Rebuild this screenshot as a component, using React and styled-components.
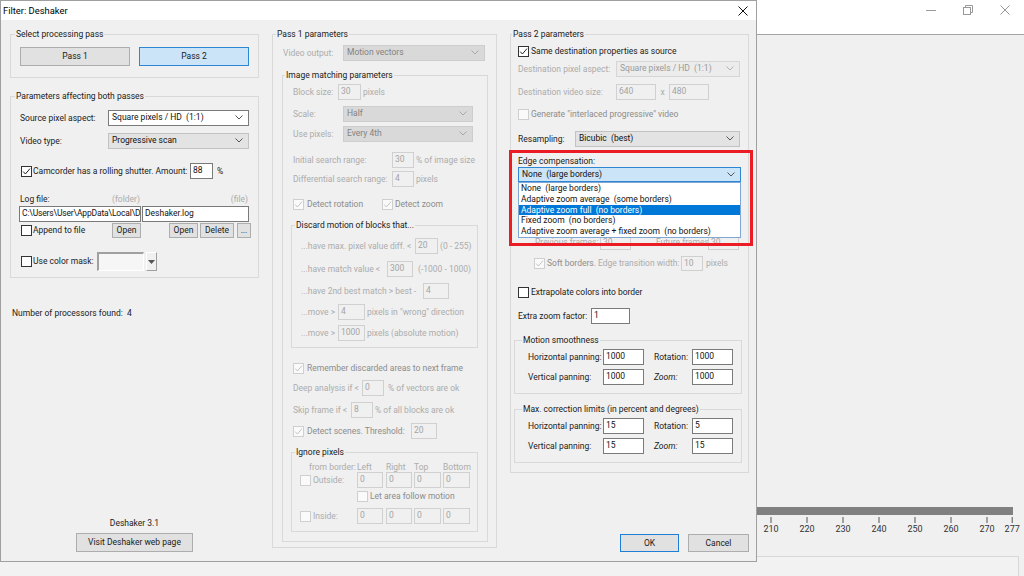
import styled, { createGlobalStyle } from 'styled-components';

const GlobalStyle = createGlobalStyle`
  html, body {
    margin: 0;
    padding: 0;
  }
  body {
    width: 1024px;
    height: 576px;
    overflow: hidden;
    background: #f0f0f0;
    font-family: Roboto, "Liberation Sans", Arial, sans-serif;
    color: #222;
  }
`;

const tone = {
  dis: '#acacac',
  disc: '#8c8c8c',
  normal: '#222',
};

const Screen = styled.div`
  position: relative;
  width: 1024px;
  height: 576px;
  overflow: hidden;
`;

const AppWindow = styled.div`
  display: flex;
  flex-direction: column;
  height: 576px;
`;

const AppTitleBar = styled.div`
  height: 34px;
  background: #fff;
  border-bottom: 1px solid #a3a3a3;
  display: flex;
  justify-content: flex-end;
  padding-right: 1px;
`;

const WinCtl = styled.div`
  width: 37px;
  height: 19px;
  display: flex;
  align-items: center;
  justify-content: center;
`;

const AppContent = styled.div`
  flex: 1;
  display: flex;
  flex-direction: column;
  justify-content: flex-end;
`;

const Timeline = styled.svg`
  display: block;
  margin-bottom: 19px;
  font-family: Roboto, "Liberation Sans", Arial, sans-serif;
`;

const BottomPanel = styled.div`
  height: 19px;
  margin-right: 5px;
  border-top: 1px solid #d8d8d8;
  border-right: 1px solid #d8d8d8;
  background: #f2f2f2;
`;

const Dialog = styled.div`
  position: absolute;
  left: 0;
  top: 0;
  width: 757px;
  height: 562px;
  box-sizing: border-box;
  border: 1px solid #a0a0a0;
  background: #f0f0f0;
  display: flex;
  flex-direction: column;
  font-size: 8.5px;
`;

const DialogTitle = styled.div`
  height: 19px;
  background: #fff;
  display: flex;
  align-items: center;
  justify-content: space-between;
  padding: 0 8px 0 2px;
  font-size: 9.4px;
  color: #000;
`;

const DialogBody = styled.div`
  flex: 1;
  display: flex;
  gap: 13px;
  padding: 0 6px 0 9px;
`;

const Column = styled.div`
  width: ${p => p.$w}px;
  flex: none;
  display: flex;
  flex-direction: column;
  padding: 9px 0 9px;
`;

const Group = styled.fieldset`
  margin: ${p => p.$mt || 0}px 0 0 ${p => p.$ml || 0}px;
  padding: 0 0 ${p => p.$pb || 0}px 0;
  border: 1px solid #d9d9d9;
  min-width: 0;
  width: ${p => (p.$w ? `${p.$w}px` : 'auto')};
  box-sizing: border-box;
  flex: none;
`;

const Legend = styled.legend`
  margin-left: ${p => p.$ml || 0}px;
  padding: 0 1px;
  height: 10px;
  line-height: 10px;
  color: #1a1a1a;
  font-size: 8.5px;
`;

const Row = styled.div`
  display: flex;
  align-items: center;
  height: ${p => p.$h || 16}px;
  margin-top: ${p => p.$mt || 0}px;
  padding-left: ${p => p.$pl || 0}px;
  padding-right: ${p => p.$pr || 0}px;
  white-space: nowrap;
  flex: none;
`;

const Text = styled.span`
  flex: none;
  width: ${p => (p.$w ? `${p.$w}px` : 'auto')};
  margin-left: ${p => p.$ml || 0}px;
  color: ${p => tone[p.$tone || 'normal']};
  font-style: ${p => (p.$italic ? 'italic' : 'normal')};
  text-align: ${p => p.$align || 'left'};
  line-height: 1;
  white-space: pre;
`;

const Spacer = styled.span`
  flex: 1;
`;

const Field = styled.div`
  flex: none;
  width: ${p => p.$w}px;
  height: ${p => p.$h || 16}px;
  margin-left: ${p => p.$ml || 0}px;
  box-sizing: border-box;
  border: 1px solid ${p => (p.$disabled ? '#d0d0d0' : '#7a7a7a')};
  background: ${p => (p.$disabled ? '#f0f0f0' : '#fff')};
  color: ${p => (p.$disabled ? '#a4a4a4' : '#111')};
  padding: 1px 1px 0 2px;
  line-height: 11px;
  letter-spacing: ${p => (p.$tight ? '-0.15px' : '0')};
  white-space: nowrap;
  overflow: hidden;
`;

const comboLook = {
  white: { bg: '#fff', border: '#7a7a7a', color: '#111', arrow: '#555' },
  gray: { bg: '#e3e3e3', border: '#c2c2c2', color: '#111', arrow: '#555' },
  list: { bg: '#d9d9d9', border: '#cdcdcd', color: '#838383', arrow: '#a8a8a8' },
  edit: { bg: '#ececec', border: '#d6d6d6', color: '#9a9a9a', arrow: '#b4b4b4' },
  focus: { bg: '#cce4f7', border: '#2f86d2', color: '#111', arrow: '#555' },
};

const Combo = styled.div`
  flex: none;
  width: ${p => p.$w}px;
  height: ${p => p.$h || 16}px;
  box-sizing: border-box;
  border: 1px solid ${p => comboLook[p.$look].border};
  background: ${p => comboLook[p.$look].bg};
  color: ${p => comboLook[p.$look].color};
  display: flex;
  align-items: center;
  justify-content: space-between;
  padding: 0 5px 1px 3px;
  line-height: 1;
  white-space: pre;
`;

const ComboWrap = styled.div`
  position: relative;
  width: ${p => p.$w}px;
  flex: none;
`;

const DropList = styled.div`
  position: absolute;
  left: 0;
  top: 100%;
  width: 100%;
  box-sizing: border-box;
  border: 1px solid #7fa7d4;
  background: #fff;
  z-index: 3;
`;

const DropItem = styled.div`
  height: 10.8px;
  line-height: 10.8px;
  padding-left: 2px;
  white-space: pre;
  background: ${p => (p.$active ? '#0078d7' : 'transparent')};
  color: ${p => (p.$active ? '#fff' : '#111')};
`;

const Box = styled.span`
  flex: none;
  width: 11px;
  height: 11px;
  box-sizing: border-box;
  border: 1px solid ${p => (p.$disabled ? '#cfcfcf' : '#333')};
  background: ${p => (p.$disabled ? '#fafafa' : '#fff')};
  display: flex;
  align-items: center;
  justify-content: center;
`;

const btnLook = {
  normal: { bg: '#e1e1e1', border: '#adadad' },
  pressed: { bg: '#cce4f7', border: '#2c86d3' },
  focus: { bg: '#e1e1e1', border: '#1f7fd6' },
};

const Button = styled.div`
  flex: none;
  width: ${p => p.$w}px;
  height: ${p => p.$h || 15}px;
  margin-left: ${p => p.$ml || 0}px;
  margin-top: ${p => p.$mt || 0}px;
  box-sizing: border-box;
  border: 1px solid ${p => btnLook[p.$look || 'normal'].border};
  background: ${p => btnLook[p.$look || 'normal'].bg};
  display: flex;
  align-items: center;
  justify-content: center;
  color: #1a1a1a;
  line-height: 1;
  white-space: nowrap;
`;

const Footer = styled.div`
  margin-top: auto;
  display: flex;
  flex-direction: ${p => (p.$stack ? 'column' : 'row')};
  justify-content: ${p => (p.$stack ? 'flex-start' : 'flex-end')};
  align-items: ${p => (p.$stack ? 'center' : 'flex-start')};
`;

const MaskWell = styled.span`
  flex: none;
  width: 47px;
  height: 19px;
  box-sizing: border-box;
  border-style: solid;
  border-width: 2px 1px 1px 2px;
  border-color: #a0a0a0 #fff #fff #a0a0a0;
  background: #f6f6f6;
`;

const MaskArrow = styled.span`
  flex: none;
  width: 11px;
  height: 19px;
  margin-left: 2px;
  box-sizing: border-box;
  border-style: solid;
  border-width: 1px;
  border-color: #fff #a0a0a0 #a0a0a0 #fff;
  display: flex;
  align-items: center;
  justify-content: center;
`;

const Annotation = styled.div`
  position: absolute;
  left: 508px;
  top: 149px;
  width: 244px;
  height: 96px;
  box-sizing: border-box;
  border: 3px solid #ec1c24;
  z-index: 5;
`;

const Chevron = ({ color = '#555' }) => (
  <svg width="8" height="5" viewBox="0 0 8 5">
    <polyline points="0.5,0.5 4,4 7.5,0.5" fill="none" stroke={color} strokeWidth="1" />
  </svg>
);

const Check = ({ checked, disabled }) => (
  <Box $disabled={disabled}>
    {checked && (
      <svg width="9" height="9" viewBox="0 0 9 9">
        <polyline
          points="1.2,4.6 3.4,7 8,1.6"
          fill="none"
          stroke={disabled ? '#c4c4c4' : '#222'}
          strokeWidth="1"
        />
      </svg>
    )}
  </Box>
);

const Select = ({ w, look, children, h }) => (
  <Combo $w={w} $look={look} $h={h}>
    <span>{children}</span>
    <Chevron color={comboLook[look].arrow} />
  </Combo>
);

const ticks = [210, 220, 230, 240, 250, 260, 270, 277];

const TimelineRuler = () => (
  <Timeline width="1024" height="32" viewBox="0 0 1024 32">
    <rect x="0" y="2" width="1013" height="8" fill="#808080" />
    {ticks.map(v => {
      const x = 771 + (v - 210) * 3.6;
      return (
        <g key={v}>
          <line x1={x} y1="12" x2={x} y2="18" stroke="#555" strokeWidth="1" />
          <text x={x} y="27" fontSize="9" textAnchor="middle" fill="#333">
            {v}
          </text>
        </g>
      );
    })}
  </Timeline>
);

const Background = () => (
  <AppWindow>
    <AppTitleBar>
      <WinCtl>
        <svg width="10" height="10" viewBox="0 0 10 10">
          <line x1="0" y1="5.5" x2="10" y2="5.5" stroke="#999" />
        </svg>
      </WinCtl>
      <WinCtl>
        <svg width="10" height="10" viewBox="0 0 10 10">
          <rect x="0.5" y="2.5" width="7" height="7" fill="none" stroke="#999" />
          <polyline points="2.5,2.5 2.5,0.5 9.5,0.5 9.5,7.5 7.5,7.5" fill="none" stroke="#999" />
        </svg>
      </WinCtl>
      <WinCtl>
        <svg width="10" height="10" viewBox="0 0 10 10">
          <line x1="0.5" y1="0.5" x2="9.5" y2="9.5" stroke="#999" />
          <line x1="9.5" y1="0.5" x2="0.5" y2="9.5" stroke="#999" />
        </svg>
      </WinCtl>
    </AppTitleBar>
    <AppContent>
      <TimelineRuler />
      <BottomPanel />
    </AppContent>
  </AppWindow>
);

const BothPasses = () => (
  <Column $w={249}>
    <Group $pb={11}>
      <Legend $ml={4}>Select processing pass</Legend>
      <Row $mt={8} $h={19} $pl={9}>
        <Button $w={110} $h={19}>Pass 1</Button>
        <Button $w={110} $h={19} $ml={9} $look="pressed">Pass 2</Button>
      </Row>
    </Group>

    <Group $mt={13} $pb={6}>
      <Legend $ml={4}>Parameters affecting both passes</Legend>
      <Row $mt={9} $pl={9}>
        <Text $w={88}>Source pixel aspect:</Text>
        <Select w={141} look="white">Square pixels / HD  (1:1)</Select>
      </Row>
      <Row $mt={7} $pl={9}>
        <Text $w={88}>Video type:</Text>
        <Select w={141} look="gray">Progressive scan</Select>
      </Row>
      <Row $mt={14} $pl={10}>
        <Check checked />
        <Text $ml={1} $w={157}>Camcorder has a rolling shutter. Amount:</Text>
        <Field $w={23}>88</Field>
        <Text $ml={4}>%</Text>
      </Row>
      <Row $mt={14} $h={12} $pl={9} $pr={10}>
        <Text $w={92}>Log file:</Text>
        <Text $tone="dis">(folder)</Text>
        <Spacer />
        <Text $tone="dis">(file)</Text>
      </Row>
      <Row $mt={1} $pl={8}>
        <Field $w={122} $tight>C:\Users\User\AppData\Local\D</Field>
        <Field $w={107} $ml={1}>Deshaker.log</Field>
      </Row>
      <Row $mt={1} $h={15} $pl={10}>
        <Check />
        <Text $ml={1} $w={79}>Append to file</Text>
        <Button $w={29}>Open</Button>
        <Button $w={29} $ml={28}>Open</Button>
        <Button $w={34} $ml={2}>Delete</Button>
        <Button $w={14} $ml={3}>...</Button>
      </Row>
      <Row $mt={14} $h={19} $pl={10}>
        <Check />
        <Text $ml={1} $w={64}>Use color mask:</Text>
        <MaskWell />
        <MaskArrow>
          <svg width="7" height="4" viewBox="0 0 7 4">
            <polygon points="0,0 7,0 3.5,4" fill="#555" />
          </svg>
        </MaskArrow>
      </Row>
    </Group>

    <Row $mt={29} $h={12} $pl={2}>
      <Text>Number of processors found:  4</Text>
    </Row>

    <Footer $stack>
      <Text>Deshaker 3.1</Text>
      <Button $w={117} $h={19} $mt={6}>Visit Deshaker web page</Button>
    </Footer>
  </Column>
);

const PassOne = () => (
  <Column $w={225}>
    <Group $pb={5}>
      <Legend $ml={3}>Pass 1 parameters</Legend>
      <Row $mt={6} $pl={10}>
        <Text $w={60} $tone="dis">Video output:</Text>
        <Select w={142} look="list">Motion vectors</Select>
      </Row>

      <Group $mt={9} $ml={9} $w={206} $pb={9}>
        <Legend $ml={2}>Image matching parameters</Legend>
        <Row $mt={4} $pl={10}>
          <Text $w={45} $tone="dis">Block size:</Text>
          <Field $w={23} $disabled>30</Field>
          <Text $ml={2} $tone="dis">pixels</Text>
        </Row>
        <Row $mt={6} $pl={10}>
          <Text $w={50} $tone="dis">Scale:</Text>
          <Select w={130} look="list">Half</Select>
        </Row>
        <Row $mt={4} $pl={10}>
          <Text $w={50} $tone="dis">Use pixels:</Text>
          <Select w={130} look="list">Every 4th</Select>
        </Row>
        <Row $mt={10} $pl={10}>
          <Text $w={99} $tone="dis">Initial search range:</Text>
          <Field $w={22} $disabled>30</Field>
          <Text $ml={2} $tone="dis">% of image size</Text>
        </Row>
        <Row $mt={3} $pl={10}>
          <Text $w={99} $tone="dis">Differential search range:</Text>
          <Field $w={22} $disabled>4</Field>
          <Text $ml={2} $tone="dis">pixels</Text>
        </Row>
        <Row $mt={10} $h={14} $pl={10}>
          <Check checked disabled />
          <Text $ml={3} $w={75} $tone="disc">Detect rotation</Text>
          <Check checked disabled />
          <Text $ml={2} $tone="disc">Detect zoom</Text>
        </Row>

        <Group $mt={9} $ml={8} $w={187} $pb={6}>
          <Legend $ml={3}>Discard motion of blocks that...</Legend>
          <Row $mt={8} $pl={9}>
            <Text $w={114} $tone="dis">...have max. pixel value diff. &lt;</Text>
            <Field $w={23} $disabled>20</Field>
            <Text $ml={2} $tone="dis">(0 - 255)</Text>
          </Row>
          <Row $mt={7} $pl={9}>
            <Text $w={86} $tone="dis">...have match value &lt;</Text>
            <Field $w={26} $disabled>300</Field>
            <Text $ml={5} $tone="dis">(-1000 - 1000)</Text>
          </Row>
          <Row $mt={6} $pl={9}>
            <Text $w={122} $tone="dis">...have 2nd best match &gt; best -</Text>
            <Field $w={26} $disabled>4</Field>
          </Row>
          <Row $mt={5} $pl={9}>
            <Text $w={37} $tone="dis">...move &gt;</Text>
            <Field $w={27} $disabled>4</Field>
            <Text $ml={2} $tone="dis">pixels in "wrong" direction</Text>
          </Row>
          <Row $mt={5} $pl={9}>
            <Text $w={37} $tone="dis">...move &gt;</Text>
            <Field $w={27} $disabled>1000</Field>
            <Text $ml={2} $tone="dis">pixels (absolute motion)</Text>
          </Row>
        </Group>

        <Row $mt={13} $h={14} $pl={10}>
          <Check checked disabled />
          <Text $ml={3} $tone="disc">Remember discarded areas to next frame</Text>
        </Row>
        <Row $mt={5} $pl={10}>
          <Text $w={69} $tone="dis">Deep analysis if &lt;</Text>
          <Field $w={22} $disabled>0</Field>
          <Text $ml={4} $tone="dis">% of vectors are ok</Text>
        </Row>
        <Row $mt={6} $pl={10}>
          <Text $w={58} $tone="dis">Skip frame if &lt;</Text>
          <Field $w={22} $disabled>8</Field>
          <Text $ml={2} $tone="dis">% of all blocks are ok</Text>
        </Row>
        <Row $mt={5} $pl={10}>
          <Check checked disabled />
          <Text $ml={3} $w={104} $tone="disc">Detect scenes. Threshold:</Text>
          <Field $w={26} $disabled>20</Field>
        </Row>

        <Group $mt={8} $ml={8} $w={187} $pb={7}>
          <Legend $ml={3}>Ignore pixels</Legend>
          <Row $mt={5} $h={10} $pl={17}>
            <Text $w={48} $tone="dis">from border:</Text>
            <Text $w={29} $tone="dis">Left</Text>
            <Text $w={28} $tone="dis">Right</Text>
            <Text $w={29} $tone="dis">Top</Text>
            <Text $tone="dis">Bottom</Text>
          </Row>
          <Row $pl={8}>
            <Check disabled />
            <Text $ml={2} $w={44} $tone="dis">Outside:</Text>
            <Field $w={26} $disabled>0</Field>
            <Field $w={26} $ml={3} $disabled>0</Field>
            <Field $w={27} $ml={2} $disabled>0</Field>
            <Field $w={27} $ml={2} $disabled>0</Field>
          </Row>
          <Row $mt={2} $h={12} $pl={65}>
            <Check disabled />
            <Text $ml={2} $tone="disc">Let area follow motion</Text>
          </Row>
          <Row $mt={6} $pl={8}>
            <Check disabled />
            <Text $ml={2} $w={44} $tone="dis">Inside:</Text>
            <Field $w={26} $disabled>0</Field>
            <Field $w={26} $ml={3} $disabled>0</Field>
            <Field $w={27} $ml={2} $disabled>0</Field>
            <Field $w={27} $ml={2} $disabled>0</Field>
          </Row>
        </Group>
      </Group>
    </Group>
  </Column>
);

const edgeOptions = [
  'None  (large borders)',
  'Adaptive zoom average  (some borders)',
  'Adaptive zoom full  (no borders)',
  'Fixed zoom  (no borders)',
  'Adaptive zoom average + fixed zoom  (no borders)',
];

const LimitRows = ({ h, r, v, z }) => (
  <>
    <Row $mt={4} $pl={13}>
      <Text $w={75}>Horizontal panning:</Text>
      <Field $w={41}>{h}</Field>
      <Text $ml={10} $w={38}>Rotation:</Text>
      <Field $w={41}>{r}</Field>
    </Row>
    <Row $mt={4} $pl={13}>
      <Text $w={75}>Vertical panning:</Text>
      <Field $w={41}>{v}</Field>
      <Text $ml={10} $w={38} $italic>Zoom:</Text>
      <Field $w={41}>{z}</Field>
    </Row>
  </>
);

const PassTwo = () => (
  <Column $w={239}>
    <Group $pb={9}>
      <Legend $ml={1}>Pass 2 parameters</Legend>
      <Row $mt={5} $h={14} $pl={7}>
        <Check checked />
        <Text $ml={2}>Same destination properties as source</Text>
      </Row>
      <Row $mt={3} $pl={7}>
        <Text $w={98} $tone="dis">Destination pixel aspect:</Text>
        <Select w={124} look="edit">Square pixels / HD  (1:1)</Select>
      </Row>
      <Row $mt={7} $pl={7}>
        <Text $w={98} $tone="dis">Destination video size:</Text>
        <Field $w={40} $disabled>640</Field>
        <Text $w={13} $align="center" $tone="dis">x</Text>
        <Field $w={40} $disabled>480</Field>
      </Row>
      <Row $mt={7} $h={14} $pl={7}>
        <Check disabled />
        <Text $ml={2} $tone="disc">Generate "interlaced progressive" video</Text>
      </Row>
      <Row $mt={10} $pl={7}>
        <Text $w={57}>Resampling:</Text>
        <Select w={165} look="gray">Bicubic  (best)</Select>
      </Row>
      <Row $mt={9} $h={10} $pl={7}>
        <Text>Edge compensation:</Text>
      </Row>
      <Row $mt={1} $h={15} $pl={7}>
        <ComboWrap $w={223}>
          <Select w={223} h={15} look="focus">None  (large borders)</Select>
          <DropList>
            {edgeOptions.map((o, i) => (
              <DropItem key={o} $active={i === 2}>{o}</DropItem>
            ))}
          </DropList>
        </ComboWrap>
      </Row>
      <Row $mt={53} $h={15} $pl={24}>
        <Text $w={65} $tone="dis">Previous frames:</Text>
        <Field $w={31} $h={15} $disabled>30</Field>
        <Text $ml={25} $w={52} $tone="dis">Future frames:</Text>
        <Field $w={31} $h={15} $disabled>30</Field>
      </Row>
      <Row $mt={6} $h={15} $pl={23}>
        <Check checked disabled />
        <Text $ml={2} $w={51} $tone="disc">Soft borders.</Text>
        <Text $w={83} $tone="dis">Edge transition width:</Text>
        <Field $w={22} $h={15} $disabled>10</Field>
        <Text $ml={3} $tone="dis">pixels</Text>
      </Row>
      <Row $mt={14} $h={14} $pl={7}>
        <Check />
        <Text $ml={2}>Extrapolate colors into border</Text>
      </Row>
      <Row $mt={9} $pl={7}>
        <Text $w={73}>Extra zoom factor:</Text>
        <Field $w={39}>1</Field>
      </Row>

      <Group $mt={11} $ml={3} $w={228} $pb={8}>
        <Legend $ml={7}>Motion smoothness</Legend>
        <LimitRows h="1000" r="1000" v="1000" z="1000" />
      </Group>

      <Group $mt={10} $ml={3} $w={228} $pb={8}>
        <Legend $ml={7}>Max. correction limits (in percent and degrees)</Legend>
        <LimitRows h="15" r="5" v="15" z="15" />
      </Group>
    </Group>

    <Footer>
      <Button $w={59} $h={18} $look="focus">OK</Button>
      <Button $w={61} $h={18} $ml={9}>Cancel</Button>
    </Footer>
  </Column>
);

const App = () => (
  <Screen>
    <GlobalStyle />
    <Background />
    <Dialog>
      <DialogTitle>
        <span>Filter: Deshaker</span>
        <svg width="10" height="10" viewBox="0 0 10 10">
          <line x1="0.5" y1="0.5" x2="9.5" y2="9.5" stroke="#111" />
          <line x1="9.5" y1="0.5" x2="0.5" y2="9.5" stroke="#111" />
        </svg>
      </DialogTitle>
      <DialogBody>
        <BothPasses />
        <PassOne />
        <PassTwo />
      </DialogBody>
      <Annotation />
    </Dialog>
  </Screen>
);

export default App;
